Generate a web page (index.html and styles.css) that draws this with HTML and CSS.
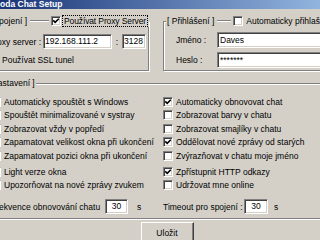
FILE: index.html
```html
<!DOCTYPE html>
<html lang="cs">
<head>
<meta charset="utf-8">
<title>Chat Setup</title>
<link rel="stylesheet" href="styles.css">
</head>
<body>
<div class="window">
  <div class="titlebar"><span class="title">Pohoda Chat Setup</span></div>
  <div class="client">
    <div class="top">
      <fieldset class="group proxy">
        <legend class="legend">
          <span class="cap">[ Připojení ]</span>
          <span class="rule"></span>
          <span class="cb on"><svg viewBox="0 0 8 8" width="8" height="8"><path d="M1.2 3.4 3.2 5.4 6.8 1.8" fill="none" stroke="#000" stroke-width="1.6"/></svg></span>
          <span class="focus">Používat Proxy Server</span>
        </legend>
        <div class="prow">
          <span class="plabel">Proxy server :</span>
          <span class="field ip">192.168.111.2</span>
          <span class="colon">:</span>
          <span class="field port">3128</span>
        </div>
        <div class="check ssl"><span class="cb"></span><span>Používat SSL tunel</span></div>
      </fieldset>
      <fieldset class="group login">
        <legend class="legend">
          <span class="cap">[ Přihlášení ]</span>
          <span class="rule short"></span>
          <span class="cb"></span>
          <span class="ltxt">Automaticky přihlašovat</span>
        </legend>
        <div class="lrow"><span class="llabel">Jméno :</span><span class="field wide">Daves</span></div>
        <div class="lrow"><span class="llabel">Heslo :</span><span class="field wide">*******</span></div>
      </fieldset>
    </div>
    <fieldset class="group settings">
      <legend class="legend set"><span class="cap">[ Nastavení ]</span></legend>
      <div class="opts">
        <div class="check"><span class="cb"></span><span>Automaticky spouštět s Windows</span></div>
        <div class="check"><span class="cb on"><svg viewBox="0 0 8 8" width="8" height="8"><path d="M1.2 3.4 3.2 5.4 6.8 1.8" fill="none" stroke="#000" stroke-width="1.6"/></svg></span><span>Automaticky obnovovat chat</span></div>
        <div class="check"><span class="cb"></span><span>Spouštět minimalizované v systray</span></div>
        <div class="check"><span class="cb"></span><span>Zobrazovat barvy v chatu</span></div>
        <div class="check"><span class="cb"></span><span>Zobrazovat vždy v popředí</span></div>
        <div class="check"><span class="cb"></span><span>Zobrazovat smajlíky v chatu</span></div>
        <div class="check"><span class="cb"></span><span>Zapamatovat velikost okna při ukončení</span></div>
        <div class="check"><span class="cb on"><svg viewBox="0 0 8 8" width="8" height="8"><path d="M1.2 3.4 3.2 5.4 6.8 1.8" fill="none" stroke="#000" stroke-width="1.6"/></svg></span><span>Oddělovat nové zprávy od starých</span></div>
        <div class="check"><span class="cb"></span><span>Zapamatovat pozici okna při ukončení</span></div>
        <div class="check"><span class="cb"></span><span>Zvýrazňovat v chatu moje jméno</span></div>
        <div class="check gap"><span class="cb"></span><span>Light verze okna</span></div>
        <div class="check gap"><span class="cb on"><svg viewBox="0 0 8 8" width="8" height="8"><path d="M1.2 3.4 3.2 5.4 6.8 1.8" fill="none" stroke="#000" stroke-width="1.6"/></svg></span><span>Zpřístupnit HTTP odkazy</span></div>
        <div class="check"><span class="cb"></span><span>Upozorňovat na nové zprávy zvukem</span></div>
        <div class="check"><span class="cb"></span><span>Udržovat mne online</span></div>
        <div class="bottom">
          <span class="flabel">Frekvence obnovování chatu</span>
          <span class="field num fnum">30</span>
          <span class="unit">s</span>
        </div>
        <div class="bottom">
          <span class="tlabel">Timeout pro spojení :</span>
          <span class="field num tnum">30</span>
          <span class="unit tunit">s</span>
        </div>
      </div>
    </fieldset>
    <div class="actions"><button class="btn" type="button">Uložit</button></div>
  </div>
</div>
</body>
</html>
```

FILE: styles.css
```css
html, body {
  margin: 0;
  padding: 0;
  background: #d4d0c8;
}
body {
  overflow: hidden;
  font-family: "Liberation Sans", Arial, sans-serif;
  font-size: 8.5px;
  color: #000;
}
*, *::before, *::after { box-sizing: border-box; }

.window {
  width: 414px;
  margin: -6px 0 0 -40px;
}
.titlebar {
  height: 15px;
  background: linear-gradient(to right, #0a246a, #a6caf0);
  display: flex;
  align-items: flex-end;
  padding-left: 24px;
}
.title {
  color: #fff;
  font-weight: bold;
  line-height: 10px;
  white-space: nowrap;
}

.client { padding: 0 20px; }

.top {
  display: flex;
  gap: 14px;
  margin-top: 6px;
}

.group {
  margin: 0;
  padding: 0;
  min-width: 0;
  border: 1px solid #808080;
  box-shadow: inset 1px 1px 0 #fff, 1px 1px 0 #fff;
}
.proxy { width: 169px; padding: 7px 0 3px 0; }
.login { flex: 1; padding: 5px 0 2px 0; }

.legend {
  display: flex;
  align-items: center;
  height: 12px;
  margin-left: 2px;
  padding: 0 1px;
  line-height: 12px;
  background: #d4d0c8;
  white-space: nowrap;
}
.legend.set { margin-left: -5px; }
.rule {
  width: 19px;
  height: 2px;
  margin: 0 2px 0 3px;
  border-top: 1px solid #808080;
  border-bottom: 1px solid #fff;
}
.rule.short { width: 14px; }
.focus {
  margin-left: 1px;
  padding: 0 1px;
  line-height: 10px;
  letter-spacing: -0.12px;
  border: 1px dotted #000;
}
.ltxt { margin-left: 3px; }

.cb {
  flex: none;
  width: 10px;
  height: 10px;
  background: #fff;
  border: 1px solid;
  border-color: #808080 #fff #fff #808080;
  box-shadow: inset 1px 1px 0 #404040, inset -1px -1px 0 #d4d0c8;
  display: flex;
  align-items: center;
  justify-content: center;
}
.cb svg { display: block; }

.field {
  display: block;
  flex: none;
  height: 15px;
  background: #fff;
  border: 1px solid;
  border-color: #808080 #fff #fff #808080;
  box-shadow: inset 1px 1px 0 #404040, inset -1px -1px 0 #d4d0c8;
  padding: 0 1px;
  line-height: 13px;
  white-space: nowrap;
  overflow: hidden;
}

.prow {
  display: flex;
  align-items: center;
  height: 15px;
}
.plabel {
  width: 60px;
  text-align: right;
  white-space: nowrap;
}
.ip { width: 69px; margin-left: 2px; }
.colon { width: 10px; text-align: center; }
.port { width: 24px; }

.check {
  display: flex;
  align-items: center;
  gap: 3px;
  height: 13.5px;
  white-space: nowrap;
}
.ssl {
  height: 14px;
  margin-top: 4px;
  padding-left: 8px;
}

.lrow {
  display: flex;
  align-items: center;
  height: 16px;
}
.lrow + .lrow { margin-top: 4px; }
.llabel {
  width: 53px;
  padding-left: 12px;
  white-space: nowrap;
}
.field.wide {
  flex: 1;
  height: 16px;
  line-height: 14px;
  padding-left: 2px;
  margin-right: 8px;
}

.settings {
  margin-top: 6px;
  padding: 6px 0 4px 10px;
}
.opts {
  display: grid;
  grid-template-columns: 172px 1fr;
}
.check.gap { margin-top: 2.5px; }

.bottom {
  display: flex;
  align-items: center;
  height: 15px;
  margin-top: 7px;
  white-space: nowrap;
}
.flabel {
  width: 109px;
  text-align: right;
}
.num { text-align: center; padding: 0; }
.fnum { width: 23px; margin-left: 5px; }
.unit { margin-left: 9px; }
.tlabel { width: 80px; }
.tnum { width: 24px; margin-left: 1px; }
.tunit { margin-left: 6px; }

.actions {
  display: flex;
  justify-content: center;
  margin-top: 3px;
}
.btn {
  width: 53px;
  height: 22px;
  padding: 0;
  font: inherit;
  color: #000;
  background: #d4d0c8;
  border: 1px solid;
  border-color: #fff #404040 #404040 #fff;
  box-shadow: inset -1px -1px 0 #808080;
}
```
